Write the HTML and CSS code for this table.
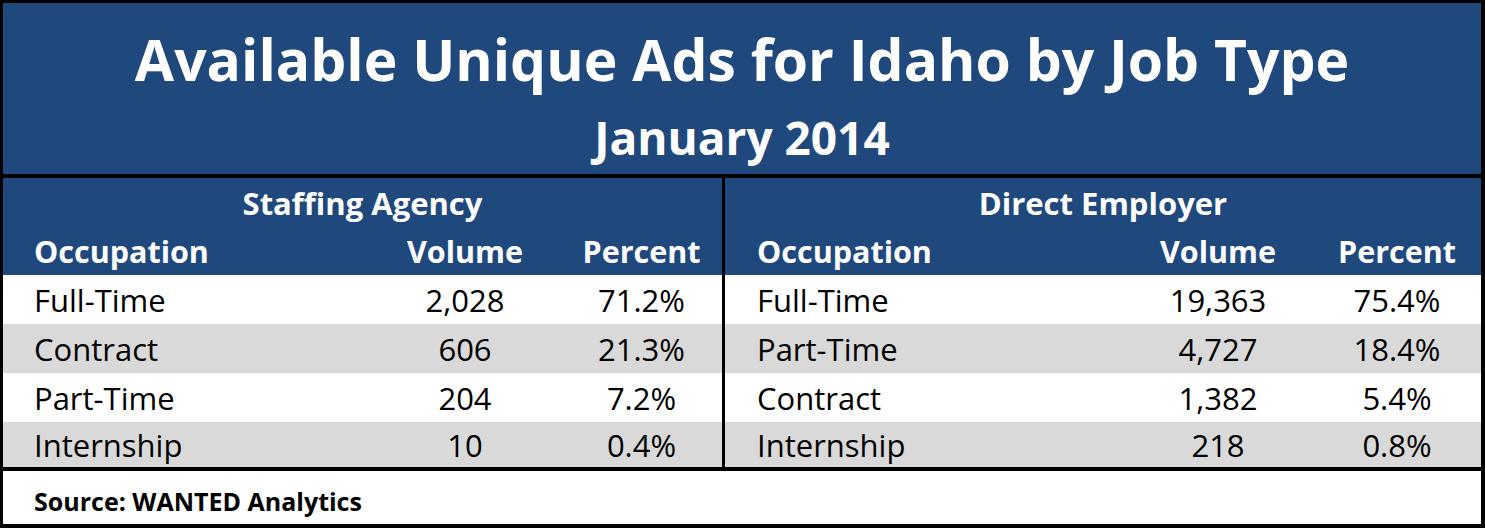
FILE: index.html
```html
<!DOCTYPE html>
<html lang="en">
<head>
<meta charset="utf-8">
<title>Available Unique Ads for Idaho by Job Type</title>
<link rel="stylesheet" href="styles.css">
</head>
<body>
<div class="sheet">
  <header class="title">
    <h1 class="title-main">Available Unique Ads for Idaho by Job Type</h1>
    <h2 class="title-sub">January 2014</h2>
  </header>
  <div class="tables">
    <section class="panel panel-left">
      <div class="group">Staffing Agency</div>
      <div class="row head">
        <div class="occ">Occupation</div>
        <div class="vol">Volume</div>
        <div class="pct">Percent</div>
      </div>
      <div class="row">
        <div class="occ">Full-Time</div>
        <div class="vol">2,028</div>
        <div class="pct">71.2%</div>
      </div>
      <div class="row alt">
        <div class="occ">Contract</div>
        <div class="vol">606</div>
        <div class="pct">21.3%</div>
      </div>
      <div class="row">
        <div class="occ">Part-Time</div>
        <div class="vol">204</div>
        <div class="pct">7.2%</div>
      </div>
      <div class="row alt last">
        <div class="occ">Internship</div>
        <div class="vol">10</div>
        <div class="pct">0.4%</div>
      </div>
    </section>
    <section class="panel panel-right">
      <div class="group">Direct Employer</div>
      <div class="row head">
        <div class="occ">Occupation</div>
        <div class="vol">Volume</div>
        <div class="pct">Percent</div>
      </div>
      <div class="row">
        <div class="occ">Full-Time</div>
        <div class="vol">19,363</div>
        <div class="pct">75.4%</div>
      </div>
      <div class="row alt">
        <div class="occ">Part-Time</div>
        <div class="vol">4,727</div>
        <div class="pct">18.4%</div>
      </div>
      <div class="row">
        <div class="occ">Contract</div>
        <div class="vol">1,382</div>
        <div class="pct">5.4%</div>
      </div>
      <div class="row alt last">
        <div class="occ">Internship</div>
        <div class="vol">218</div>
        <div class="pct">0.8%</div>
      </div>
    </section>
  </div>
  <footer class="source">Source: WANTED Analytics</footer>
</div>
</body>
</html>
```
FILE: styles.css
```css
* {
  box-sizing: border-box;
}

html, body {
  margin: 0;
  padding: 0;
  background: #ffffff;
}

body {
  font-family: "Open Sans", "Lato", "Liberation Sans", sans-serif;
  color: #000000;
}

.sheet {
  width: 1485px;
  height: 528px;
  border-style: solid;
  border-color: #000000;
  border-width: 3px 4px 4px 3px;
  display: flex;
  flex-direction: column;
}

.title {
  height: 175px;
  background: #1f497d;
  border-bottom: 4px solid #000000;
  color: #ffffff;
  text-align: center;
  padding-top: 21px;
}

.title-main {
  margin: 0;
  font-size: 57px;
  line-height: 70px;
  font-weight: 700;
}

.title-sub {
  margin: 16px 0 0;
  font-size: 46px;
  line-height: 55px;
  font-weight: 700;
}

.tables {
  display: flex;
}

.panel {
  display: flex;
  flex-direction: column;
}

.panel-left {
  width: 722px;
  border-right: 3px solid #000000;
}

.panel-right {
  flex: 1;
}

.group {
  height: 49px;
  background: #1f497d;
  color: #ffffff;
  font-weight: 700;
  font-size: 31px;
  display: flex;
  align-items: center;
  justify-content: center;
}

.row {
  display: grid;
  align-items: center;
  height: 49px;
  font-size: 31px;
  background: #ffffff;
}

.row.head {
  height: 48px;
  background: #1f497d;
  color: #ffffff;
  font-weight: 700;
  font-size: 30.5px;
}

.row.alt {
  background: #d9d9d9;
}

.row.last {
  height: 45px;
}

.panel-left .row {
  grid-template-columns: 382px 160px 177px;
}

.panel-right .row {
  grid-template-columns: 413px 160px 183px;
}

.occ {
  padding-left: 31px;
  white-space: nowrap;
}

.panel-right .occ {
  padding-left: 32px;
}

.vol {
  text-align: center;
}

.pct {
  text-align: center;
  padding-left: 16px;
}

.panel-right .pct {
  padding-left: 15px;
}

.source {
  border-top: 4px solid #000000;
  flex: 1;
  font-weight: 700;
  font-size: 25px;
  padding-top: 13px;
  padding-left: 31px;
}
```
